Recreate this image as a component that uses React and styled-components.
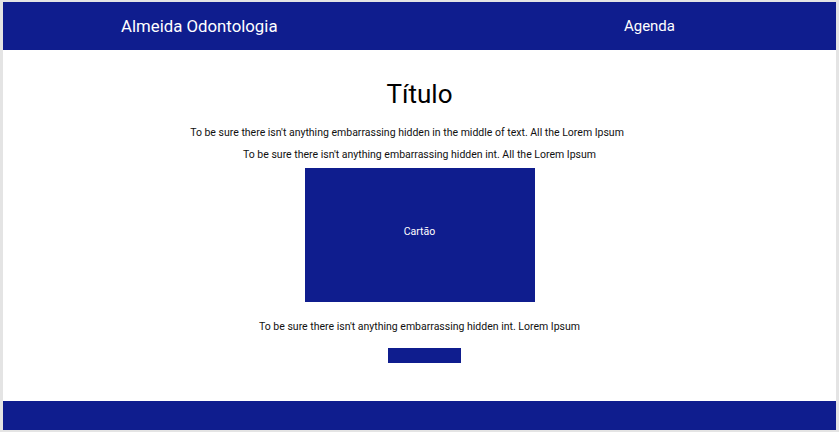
import React from 'react';
import styled, { createGlobalStyle } from 'styled-components';

const GlobalStyle = createGlobalStyle`
  html, body {
    margin: 0;
    padding: 0;
    background: #e4e4e4;
    font-family: Roboto, "Liberation Sans", Arial, sans-serif;
  }
  #root {
    padding: 2px 3px 2px 3px;
  }
`;

const Page = styled.div`
  display: flex;
  flex-direction: column;
  height: 428px;
  background: #ffffff;
`;

const Header = styled.header`
  display: flex;
  justify-content: space-between;
  align-items: center;
  height: 48px;
  padding: 0 161px 0 118px;
  background: #0f1d8e;
  color: #ffffff;
`;

const Brand = styled.h1`
  margin: 0;
  font-size: 16.8px;
  font-weight: 400;
`;

const NavLink = styled.a`
  font-size: 15px;
  color: #ffffff;
  text-decoration: none;
  cursor: pointer;
`;

const Main = styled.main`
  flex: 1;
  display: flex;
  flex-direction: column;
  align-items: center;
`;

const Title = styled.h2`
  margin: 29px 0 0;
  font-size: 26px;
  font-weight: 400;
  line-height: 30px;
  color: #000000;
`;

const Paragraph = styled.p`
  margin: ${({ top }) => top}px 0 0;
  padding-right: ${({ shift }) => shift || 0}px;
  font-size: 10.5px;
  line-height: 16px;
  color: #111111;
`;

const Card = styled.div`
  display: flex;
  align-items: center;
  justify-content: center;
  box-sizing: border-box;
  width: 230px;
  height: 134px;
  margin-top: 5px;
  padding-bottom: 8px;
  background: #0f1d8e;
  color: #ffffff;
  font-size: 10.5px;
`;

const Button = styled.button`
  width: 73px;
  height: 15px;
  margin: 13px 0 0 9px;
  padding: 0;
  border: none;
  background: #0f1d8e;
  cursor: pointer;
`;

const Footer = styled.footer`
  height: 29px;
  background: #0f1d8e;
`;

export default function App() {
  return (
    <>
      <GlobalStyle />
      <Page>
        <Header>
          <Brand>Almeida Odontologia</Brand>
          <NavLink>Agenda</NavLink>
        </Header>
        <Main>
          <Title>Título</Title>
          <Paragraph top={16} shift={25}>
            To be sure there isn't anything embarrassing hidden in the middle of text. All the Lorem Ipsum
          </Paragraph>
          <Paragraph top={6}>
            To be sure there isn't anything embarrassing hidden int. All the Lorem Ipsum
          </Paragraph>
          <Card>Cartão</Card>
          <Paragraph top={17}>
            To be sure there isn't anything embarrassing hidden int. Lorem Ipsum
          </Paragraph>
          <Button />
        </Main>
        <Footer />
      </Page>
    </>
  );
}
